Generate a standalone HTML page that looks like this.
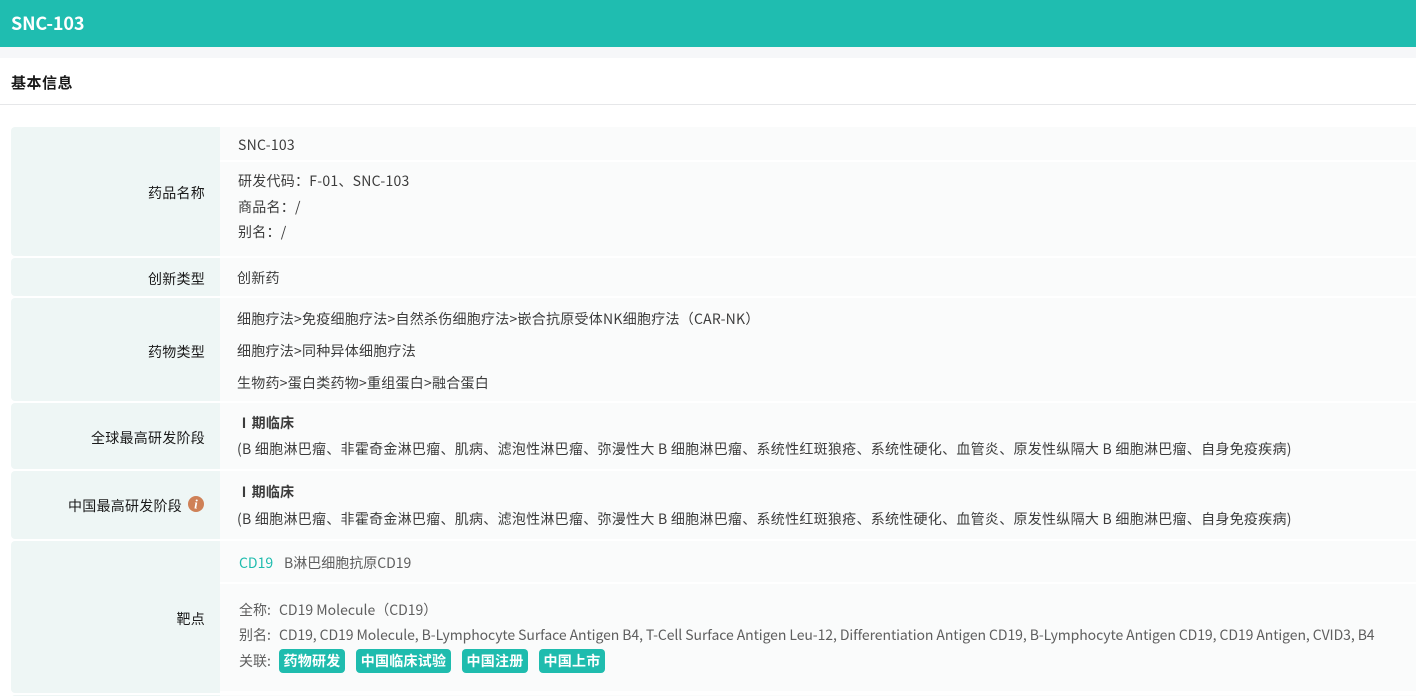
<!DOCTYPE html>
<html lang="zh">
<head>
<meta charset="utf-8">
<style>
html,body{margin:0;padding:0;background:#fff}
#p{position:relative;width:1416px;height:696px;overflow:hidden;background:#fff;font-family:"Noto Sans CJK SC","Liberation Sans",sans-serif;font-size:14px;color:#3c3c3c;letter-spacing:.25px}
.a{position:absolute;white-space:nowrap;line-height:20px}
.l{position:absolute;left:11px;width:209px;background:#eef6f5;border-radius:4px 0 0 4px}
.v{position:absolute;left:220px;right:0;background:#fafbfb}
.k{position:absolute;right:1211px;white-space:nowrap;line-height:20px;color:#1a1a1a}
.g{color:#5e5e5e}
.t{position:absolute;top:649px;height:24px;line-height:24px;background:#1fbcae;color:#fff;border-radius:4px;text-align:center;font-weight:700;white-space:nowrap}
.w{letter-spacing:.275px}
</style>
</head>
<body>
<div id="p">
<div style="position:absolute;left:0;top:0;width:1416px;height:47px;background:#1fbdb0"></div>
<div class="a" style="left:11px;top:10px;line-height:26px;font-size:18px;font-weight:700;color:#fff;letter-spacing:-.15px">SNC-103</div>
<div style="position:absolute;left:0;top:47px;width:1416px;height:11px;background:#f6f7f9"></div>
<div style="position:absolute;left:0;top:104px;width:1416px;height:1px;background:#e6e7e9"></div>
<div class="a" style="left:11px;top:73px;font-size:15px;font-weight:700;color:#1a1a1a;letter-spacing:.5px">基本信息</div>

<div class="l" style="top:127px;height:129px"></div>
<div class="v" style="top:127px;height:33px"></div>
<div class="v" style="top:162px;height:94px"></div>
<div class="l" style="top:258px;height:38px"></div>
<div class="v" style="top:258px;height:38px"></div>
<div class="l" style="top:298px;height:103px"></div>
<div class="v" style="top:298px;height:103px"></div>
<div class="l" style="top:403px;height:66px"></div>
<div class="v" style="top:403px;height:66px"></div>
<div class="l" style="top:471px;height:68px"></div>
<div class="v" style="top:471px;height:68px"></div>
<div class="l" style="top:541px;height:152px"></div>
<div class="v" style="top:541px;height:41px"></div>
<div class="v" style="top:584px;height:107px"></div>
<div class="l" style="top:695px;height:10px"></div>
<div class="v" style="top:695px;height:10px"></div>

<div class="k" style="top:183px">药品名称</div>
<div class="k" style="top:269px">创新类型</div>
<div class="k" style="top:342px">药物类型</div>
<div class="k" style="top:428px">全球最高研发阶段</div>
<div class="k" style="top:496px;right:1234px">中国最高研发阶段</div>
<svg style="position:absolute;left:188px;top:496px" width="16" height="16" viewBox="0 0 16 16"><circle cx="8" cy="8" r="8" fill="#cf8157"/><text x="8" y="12.5" text-anchor="middle" font-family="Liberation Serif, serif" font-style="italic" font-weight="700" font-size="13" fill="#fff">i</text></svg>
<div class="k" style="top:609px">靶点</div>

<div class="a" style="left:238px;top:135px">SNC-103</div>
<div class="a" style="left:238px;top:171px">研发代码：F-01、SNC-103</div>
<div class="a" style="left:238px;top:197px">商品名：/</div>
<div class="a" style="left:238px;top:222px">别名：/</div>
<div class="a" style="left:237px;top:268px">创新药</div>
<div class="a" style="left:237px;top:309px">细胞疗法&gt;免疫细胞疗法&gt;自然杀伤细胞疗法&gt;嵌合抗原受体NK细胞疗法（CAR-NK）</div>
<div class="a" style="left:237px;top:341px">细胞疗法&gt;同种异体细胞疗法</div>
<div class="a" style="left:237px;top:373px">生物药&gt;蛋白类药物&gt;重组蛋白&gt;融合蛋白</div>
<div class="a" style="left:237px;top:413px;font-weight:700;word-spacing:-3px">Ⅰ 期临床</div>
<div class="a w" style="left:237px;top:439px">(B 细胞淋巴瘤、非霍奇金淋巴瘤、肌病、滤泡性淋巴瘤、弥漫性大 B 细胞淋巴瘤、系统性红斑狼疮、系统性硬化、血管炎、原发性纵隔大 B 细胞淋巴瘤、自身免疫疾病)</div>
<div class="a" style="left:237px;top:482px;font-weight:700;word-spacing:-3px">Ⅰ 期临床</div>
<div class="a w" style="left:237px;top:509px">(B 细胞淋巴瘤、非霍奇金淋巴瘤、肌病、滤泡性淋巴瘤、弥漫性大 B 细胞淋巴瘤、系统性红斑狼疮、系统性硬化、血管炎、原发性纵隔大 B 细胞淋巴瘤、自身免疫疾病)</div>
<div class="a" style="left:239px;top:553px;color:#1fbcae;letter-spacing:0">CD19</div>
<div class="a g" style="left:284px;top:553px;letter-spacing:0">B淋巴细胞抗原CD19</div>
<div class="a g" style="left:239px;top:600px;letter-spacing:0">全称:</div>
<div class="a g" style="left:279px;top:600px;letter-spacing:0">CD19 Molecule（CD19）</div>
<div class="a g" style="left:239px;top:625px;letter-spacing:0">别名:</div>
<div class="a g" style="left:279px;top:625px;letter-spacing:-.08px">CD19, CD19 Molecule, B-Lymphocyte Surface Antigen B4, T-Cell Surface Antigen Leu-12, Differentiation Antigen CD19, B-Lymphocyte Antigen CD19, CD19 Antigen, CVID3, B4</div>
<div class="a g" style="left:239px;top:651px;letter-spacing:0">关联:</div>
<div class="t" style="left:279px;width:66px">药物研发</div>
<div class="t" style="left:356px;width:95px">中国临床试验</div>
<div class="t" style="left:462px;width:66px">中国注册</div>
<div class="t" style="left:539px;width:66px">中国上市</div>
</div>
</body>
</html>
